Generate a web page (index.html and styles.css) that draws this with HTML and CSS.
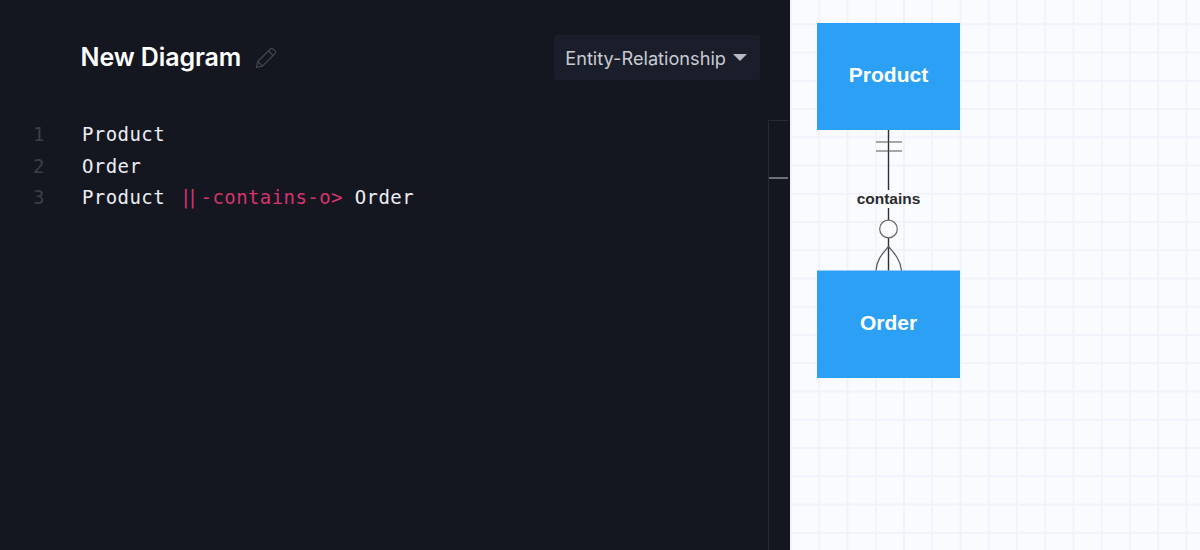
FILE: index.html
```html
<!DOCTYPE html>
<html lang="en">
<head>
<meta charset="utf-8">
<title>New Diagram</title>
<link rel="stylesheet" href="styles.css">
</head>
<body>
<div class="app">
  <section class="editor">
    <header class="toolbar">
      <div class="title-group">
        <h1 class="title">New Diagram</h1>
        <svg class="pencil" width="24" height="24" viewBox="0 0 24 24" fill="none" stroke="#43464f" stroke-width="1.2" stroke-linejoin="round" stroke-linecap="round">
          <path d="M2.5 21.5l1.3-6L16.6 2.8a1.6 1.6 0 0 1 2.3 0l2.3 2.3a1.6 1.6 0 0 1 0 2.3L8.400 20.200z"/>
          <path d="M14.500 4.900l4.600 4.600"/>
          <path d="M3.800 15.500l4.600 4.700"/>
        </svg>
      </div>
      <button class="select" type="button">Entity-Relationship<span class="caret"></span></button>
    </header>
    <div class="body">
      <div class="code">
        <div class="line"><span class="num">1</span><span>Product</span></div>
        <div class="line"><span class="num">2</span><span>Order</span></div>
        <div class="line"><span class="num">3</span><span>Product <span class="rel"><span class="bars">||</span>-contains-o&gt;</span> Order</span></div>
      </div>
      <div class="scroll"><div class="thumb"></div></div>
    </div>
  </section>
  <section class="canvas">
    <svg class="diagram" width="410" height="550" viewBox="790 0 410 550">
      <rect x="817" y="23" width="143" height="107" fill="#2ba0f5"/>
      <rect x="817" y="270.500" width="143" height="107.500" fill="#2ba0f5"/>
      <text class="node-label" x="888.500" y="82">Product</text>
      <text class="node-label" x="888.500" y="329.500">Order</text>
      <path d="M888.500 130V190M888.500 208V220M888.500 238V270.500" fill="none" stroke="#2f2f2f" stroke-width="1.400"/>
      <g fill="none" stroke="#555" stroke-width="1.200">
        <path d="M876 142H902M876 151H902"/>
        <circle cx="888.500" cy="229" r="8.800" fill="#fbfbfe" stroke="#666"/>
        <path d="M876 270.500C876.500 259 884 252 888.500 246.500C893 252 900.500 259 901.500 270.500"/>
      </g>
      <text class="edge-label" x="888.500" y="204">contains</text>
    </svg>
  </section>
</div>
</body>
</html>
```

FILE: styles.css
```css
* {
  box-sizing: border-box;
}

html,
body {
  margin: 0;
  height: 100%;
  overflow: hidden;
}

.app {
  display: flex;
  width: 1200px;
  height: 550px;
}

.editor {
  display: flex;
  flex-direction: column;
  width: 790px;
  background: #141720;
}

.toolbar {
  display: flex;
  align-items: center;
  justify-content: space-between;
  height: 120px;
  padding: 0 30px 5px 80.500px;
}

.title-group {
  display: flex;
  align-items: center;
  gap: 13px;
}

.title {
  margin: 0 0 2px;
  font: 600 25px/30px Inter, "Liberation Sans", sans-serif;
  letter-spacing: -0.1px;
  color: #fff;
}

.pencil {
  display: block;
}

.select {
  display: flex;
  align-items: center;
  gap: 7px;
  height: 45px;
  padding: 0 13px 0 11px;
  border: 0;
  border-radius: 3px;
  background: #1a1e2b;
  color: #c8cad0;
  font: 400 18.200px/24px Inter, "Liberation Sans", sans-serif;
}

.caret {
  width: 0;
  height: 0;
  border-left: 7px solid transparent;
  border-right: 7px solid transparent;
  border-top: 7px solid #b9bbc2;
}

.body {
  display: flex;
  flex: 1;
  min-height: 0;
}

.code {
  flex: 1;
  margin-top: -1px;
  font: 400 19px/31.500px "DejaVu Sans Mono", "Liberation Mono", monospace;
  letter-spacing: 0.420px;
  color: #eceef2;
}

.line {
  display: flex;
  height: 31.500px;
}

.num {
  width: 82px;
  padding-left: 33px;
  color: #3a3e47;
}

.rel {
  color: #d6336c;
}

.bars {
  padding: 0 6.700px 0 3px;
  letter-spacing: -4.440px;
}

.scroll {
  width: 20px;
  margin-right: 2px;
  border-left: 1px solid #262a33;
  border-top: 1px solid #262a33;
  padding-top: 56px;
}

.thumb {
  height: 2px;
  background: #6d7078;
}

.canvas {
  flex: 1;
  background-color: #fafbff;
  background-image:
    linear-gradient(to right, #f1f2fb 2px, transparent 2px),
    linear-gradient(to bottom, #f1f2fb 2px, transparent 2px);
  background-size: 28.250px 28.250px;
  background-position: 0 -5px;
}

.diagram {
  display: block;
}

.node-label {
  font: 700 21px "Liberation Sans", Arial, sans-serif;
  fill: #fff;
  text-anchor: middle;
}

.edge-label {
  font: 700 15.500px "Liberation Sans", Arial, sans-serif;
  fill: #2b2b2b;
  text-anchor: middle;
}
```
